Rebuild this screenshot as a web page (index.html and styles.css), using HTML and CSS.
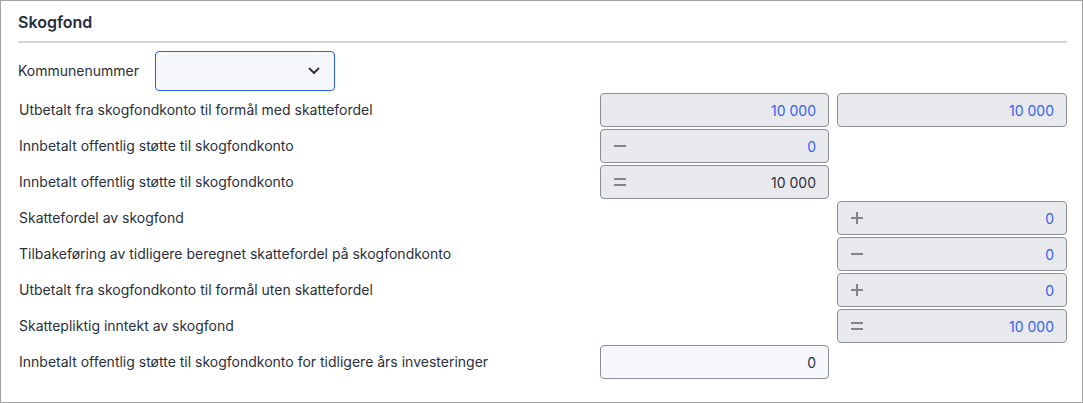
FILE: index.html
```
<!DOCTYPE html>
<html lang="no">
<head>
    <meta charset="UTF-8">
    <title>Skogfond</title>
    <link rel="stylesheet" href="styles.css">
</head>
<body>
    <div class="panel">
        <h2 class="panel-title">Skogfond</h2>

        <div class="select-row">
            <label for="kommune">Kommunenummer</label>
            <div class="select">
                <select id="kommune"></select>
                <svg class="chevron" width="12" height="8" viewBox="0 0 12 8"><path d="M1.5 1.5 6 6l4.5-4.5" fill="none" stroke="#2b303b" stroke-width="1.8" stroke-linecap="round" stroke-linejoin="round"/></svg>
            </div>
        </div>

        <div class="rows">
            <div class="label">Utbetalt fra skogfondkonto til formål med skattefordel</div>
            <div class="field"><span class="value blue">10 000</span></div>
            <div class="field"><span class="value blue">10 000</span></div>

            <div class="label">Innbetalt offentlig støtte til skogfondkonto</div>
            <div class="field"><span class="op minus"></span><span class="value blue">0</span></div>
            <div class="empty"></div>

            <div class="label">Innbetalt offentlig støtte til skogfondkonto</div>
            <div class="field"><span class="op equals"></span><span class="value">10 000</span></div>
            <div class="empty"></div>

            <div class="label">Skattefordel av skogfond</div>
            <div class="empty"></div>
            <div class="field"><span class="op plus"></span><span class="value blue">0</span></div>

            <div class="label">Tilbakeføring av tidligere beregnet skattefordel på skogfondkonto</div>
            <div class="empty"></div>
            <div class="field"><span class="op minus"></span><span class="value blue">0</span></div>

            <div class="label">Utbetalt fra skogfondkonto til formål uten skattefordel</div>
            <div class="empty"></div>
            <div class="field"><span class="op plus"></span><span class="value blue">0</span></div>

            <div class="label">Skattepliktig inntekt av skogfond</div>
            <div class="empty"></div>
            <div class="field"><span class="op equals"></span><span class="value blue">10 000</span></div>

            <div class="label">Innbetalt offentlig støtte til skogfondkonto for tidligere års investeringer</div>
            <div class="field input"><span class="value">0</span></div>
            <div class="empty"></div>
        </div>
    </div>
</body>
</html>
```

FILE: styles.css
```
body {
    margin: 0;
    font-family: Inter, "Noto Sans", sans-serif;
    color: #2b303b;
    background: #fff;
}

.panel {
    height: 403px;
    box-sizing: border-box;
    border: 1px solid #a3a3a3;
    padding: 0 15px 0 17px;
}

.panel-title {
    margin: 0;
    height: 40px;
    line-height: 42px;
    font-size: 16px;
    font-weight: 600;
    color: #252d3d;
    border-bottom: 2px solid #d6d6da;
}

.select-row {
    display: flex;
    align-items: center;
    margin-top: 8px;
    height: 40px;
    font-size: 14px;
}

.select-row label {
    width: 137px;
    padding-bottom: 2px;
}

.select {
    position: relative;
    width: 180px;
    height: 40px;
}

.select select {
    appearance: none;
    width: 100%;
    height: 100%;
    box-sizing: border-box;
    border: 1px solid #2a5bf0;
    border-radius: 4px;
    background: #f5f7fb;
}

.chevron {
    position: absolute;
    right: 15px;
    top: 16px;
    pointer-events: none;
}

.rows {
    display: grid;
    grid-template-columns: 1fr 229px 230px;
    grid-auto-rows: 34px;
    column-gap: 8px;
    row-gap: 2px;
    margin-top: 2px;
    font-size: 14px;
}

.label {
    display: flex;
    align-items: center;
    padding: 0 0 2px 1px;
}

.field {
    display: flex;
    align-items: center;
    box-sizing: border-box;
    border: 1px solid #8b8e97;
    border-radius: 4px;
    background: #e8e9ed;
    padding: 0 12px 0 13px;
}

.field.input {
    background: #f5f7fb;
}

.value {
    margin-left: auto;
    color: #2b303b;
}

.value.blue {
    color: #3563f4;
}

.op {
    position: relative;
    width: 12px;
    height: 12px;
}

.op::before,
.op::after {
    content: "";
    position: absolute;
    left: 0;
    width: 12px;
    height: 2px;
    background: #80838c;
}

.minus::before {
    top: 5px;
}

.minus::after {
    display: none;
}

.equals::before {
    top: 2px;
}

.equals::after {
    top: 8px;
}

.plus::before {
    top: 5px;
}

.plus::after {
    top: 5px;
    transform: rotate(90deg);
}
```
